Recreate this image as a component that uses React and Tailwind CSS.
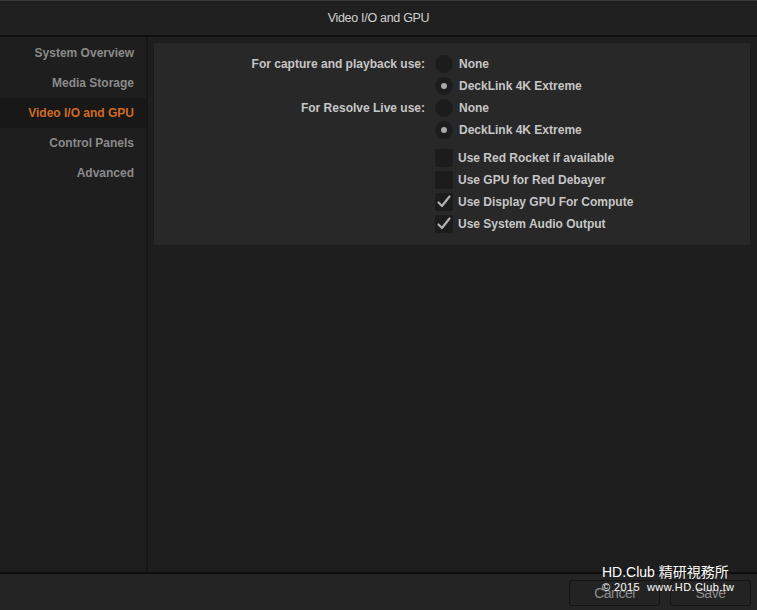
import React from "react";

const navItems = ["System Overview", "Media Storage", "Video I/O and GPU", "Control Panels", "Advanced"];

const Radio = ({ checked }) => (
    <span className="flex h-[18px] w-[18px] items-center justify-center rounded-full bg-[#1c1c1c] shadow-[inset_0_0_0_1px_#202020]">
        {checked && <span className="block h-[6px] w-[6px] rounded-full bg-[#a8a8a8]" />}
    </span>
);

const Checkbox = ({ checked }) => (
    <span className="flex h-[18px] w-[18px] items-center justify-center rounded-[2px] bg-[#1c1c1c]">
        {checked && (
            <svg width="16" height="16" viewBox="0 0 16 16">
                <path d="M2.5 8.5 L6 12 L13.5 2.5" fill="none" stroke="#b0b0b0" strokeWidth="2.2" strokeLinecap="round" strokeLinejoin="round" />
            </svg>
        )}
    </span>
);

const Row = ({ label, children }) => (
    <div className="flex h-[22px] items-center">
        <div className="w-[281px] pr-[10px] text-right text-[#c6c6c6]">{label}</div>
        {children}
    </div>
);

const App = () => {
    return (
        <div className="relative flex h-[610px] w-[757px] flex-col overflow-hidden bg-[#1e1e1e] text-[12px] font-bold" style={{ fontFamily: '"Liberation Sans", Arial, sans-serif' }}>
            {/* title */}
            <div className="flex h-[37px] items-center justify-center border-t border-t-[#3c3c3c] border-b-2 border-b-[#0e0e0e] bg-[#202020] text-[#d0d0d0] font-normal text-[12.5px] tracking-[-0.3px]">
                Video I/O and GPU
            </div>
            <div className="flex flex-1 min-h-0">
                {/* sidebar */}
                <div className="flex w-[148px] flex-col border-r-2 border-r-[#151515] pt-[1px]">
                    {navItems.map((item) => (
                        <div
                            key={item}
                            className={`flex h-[30px] items-center justify-end pr-[12px] ${item === "Video I/O and GPU" ? "bg-[#181818] text-[#d06a24]" : "text-[#8a8a8a]"}`}
                        >
                            {item}
                        </div>
                    ))}
                </div>
                {/* content */}
                <div className="flex-1 pl-[5px] pr-[6px] pt-[5px]">
                    <div className="h-[204px] border border-[#1a1a1a] bg-[#282828] pt-[10px]">
                        <Row label="For capture and playback use:">
                            <Radio />
                            <span className="ml-[6px] text-[#c6c6c6]">None</span>
                        </Row>
                        <Row label="">
                            <Radio checked />
                            <span className="ml-[6px] text-[#c6c6c6]">DeckLink 4K Extreme</span>
                        </Row>
                        <Row label="For Resolve Live use:">
                            <Radio />
                            <span className="ml-[6px] text-[#c6c6c6]">None</span>
                        </Row>
                        <Row label="">
                            <Radio checked />
                            <span className="ml-[6px] text-[#c6c6c6]">DeckLink 4K Extreme</span>
                        </Row>
                        <div className="h-[6px]" />
                        {[
                            ["Use Red Rocket if available", false],
                            ["Use GPU for Red Debayer", false],
                            ["Use Display GPU For Compute", true],
                            ["Use System Audio Output", true],
                        ].map(([text, checked]) => (
                            <Row key={text} label="">
                                <Checkbox checked={checked} />
                                <span className="ml-[5px] text-[#c6c6c6]">{text}</span>
                            </Row>
                        ))}
                    </div>
                </div>
            </div>
            {/* footer */}
            <div className="flex h-[38px] items-center justify-end gap-[10px] border-t-2 border-t-[#0e0e0e] bg-[#242424] pr-[6px] pt-[2px]">
                <button className="h-[26px] w-[91px] rounded-[3px] border border-[#141414] bg-[#232323] text-[#8c8c8c] text-[14px] font-normal tracking-[-0.5px]">Cancel</button>
                <button className="h-[26px] w-[81px] rounded-[3px] border border-[#141414] bg-[#232323] text-[#8c8c8c] text-[14px] font-normal tracking-[-0.5px]">Save</button>
            </div>
            {/* watermark */}
            <div className="absolute left-[602px] top-[565px] flex flex-col whitespace-nowrap text-white font-normal leading-none">
                <span className="text-[14px]" style={{ fontFamily: '"Liberation Sans", "Noto Sans CJK TC", sans-serif' }}>HD.Club 精研視務所</span>
                <span className="mt-[3px] text-[11px] tracking-[0.4px]">© 2015&nbsp; www.HD.Club.tw</span>
            </div>
        </div>
    );
};

export default App;
